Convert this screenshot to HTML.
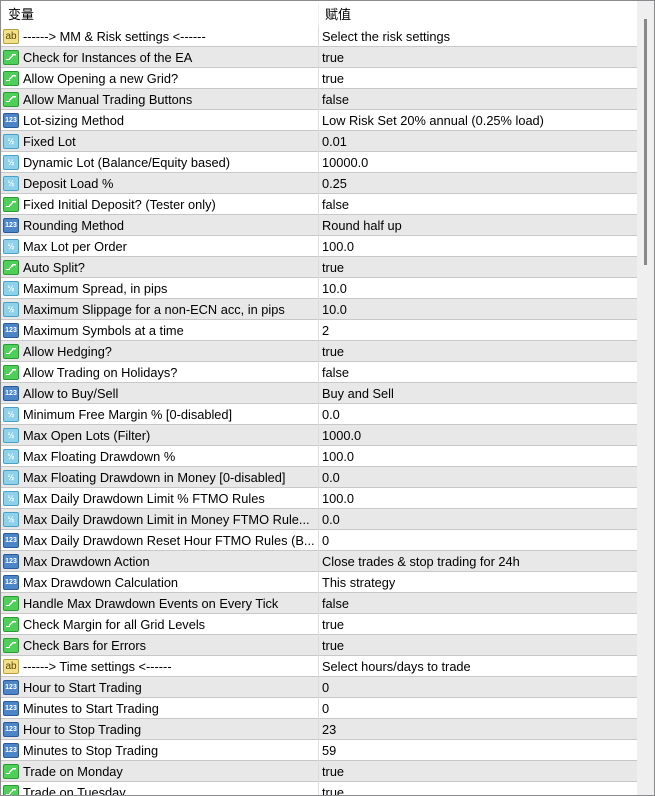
<!DOCTYPE html>
<html><head><meta charset="utf-8"><style>
*{margin:0;padding:0;box-sizing:border-box}
html,body{width:655px;height:796px;overflow:hidden}
body{background:#fff;font-family:"Liberation Sans","Noto Sans CJK SC",sans-serif;font-size:12.8px;color:#000;position:relative}
.clip{position:absolute;left:1px;top:1px;width:636px;height:794px;overflow:hidden}
.frame{position:absolute;left:0;top:0;width:655px;height:796px;border:1px solid #8a8a8f}
.hdr{position:absolute;left:0;top:0;width:636px;height:25px;background:#fff}
.hdr span{position:absolute;top:3px;font-size:13px}
.hdiv{position:absolute;left:317px;top:3px;width:1px;height:22px;background:#f0f0f0}
.row{position:absolute;left:0;width:636px;height:21px;border-bottom:1px solid #c8c8c8;white-space:nowrap}
.row.g{background:#e8e8e8}
.row .n{position:absolute;left:22px;top:3px}
.row .v{position:absolute;left:321px;top:3px}
.row .d{position:absolute;left:317px;top:0;width:1px;height:21px;background:#dcdcdc}
.ic{position:absolute;left:2px;top:3px;width:16px;height:15px;border-radius:2px;font-size:8px;line-height:13px;text-align:center;font-weight:bold}
.ab{background:#f3e08a;border:1px solid #b8a040;color:#5a4a00;font-size:10px;font-weight:normal}
.bo{background:#4fcf5a;border:1px solid #2a9a33}
.bo:after{content:"";position:absolute;left:2px;top:3px;width:10px;height:6px;background:linear-gradient(#fff,#fff) 0 5px/4px 1.5px no-repeat,linear-gradient(#fff,#fff) 6px 0/4px 1.5px no-repeat,linear-gradient(135deg,transparent 40%,#fff 40%,#fff 60%,transparent 60%) 3px 0/4px 6px no-repeat}
.n1{background:#4d86c8;border:1px solid #2a5a99;color:#fff;font-size:7px}
.hf{background:#8fd0ea;border:1px solid #4aa0c4;color:#fff;font-size:8px}
.sb{position:absolute;left:637px;top:1px;width:17px;height:794px;background:#efefef}
.th{position:absolute;left:644px;top:19px;width:3px;height:246px;background:#888}
</style></head><body>
<div class="clip">
<div class="hdr"><span style="left:7px">变量</span><span style="left:324px">赋值</span><div class="hdiv"></div></div>
<div class="row" style="top:25px"><div class="ic ab">ab</div><span class="n">------&gt; MM &amp; Risk settings &lt;------</span><div class="d"></div><span class="v">Select the risk settings</span></div>
<div class="row g" style="top:46px"><div class="ic bo"></div><span class="n">Check for Instances of the EA</span><div class="d"></div><span class="v">true</span></div>
<div class="row" style="top:67px"><div class="ic bo"></div><span class="n">Allow Opening a new Grid?</span><div class="d"></div><span class="v">true</span></div>
<div class="row g" style="top:88px"><div class="ic bo"></div><span class="n">Allow Manual Trading Buttons</span><div class="d"></div><span class="v">false</span></div>
<div class="row" style="top:109px"><div class="ic n1">123</div><span class="n">Lot-sizing Method</span><div class="d"></div><span class="v">Low Risk Set 20% annual (0.25% load)</span></div>
<div class="row g" style="top:130px"><div class="ic hf">½</div><span class="n">Fixed Lot</span><div class="d"></div><span class="v">0.01</span></div>
<div class="row" style="top:151px"><div class="ic hf">½</div><span class="n">Dynamic Lot (Balance/Equity based)</span><div class="d"></div><span class="v">10000.0</span></div>
<div class="row g" style="top:172px"><div class="ic hf">½</div><span class="n">Deposit Load %</span><div class="d"></div><span class="v">0.25</span></div>
<div class="row" style="top:193px"><div class="ic bo"></div><span class="n">Fixed Initial Deposit? (Tester only)</span><div class="d"></div><span class="v">false</span></div>
<div class="row g" style="top:214px"><div class="ic n1">123</div><span class="n">Rounding Method</span><div class="d"></div><span class="v">Round half up</span></div>
<div class="row" style="top:235px"><div class="ic hf">½</div><span class="n">Max Lot per Order</span><div class="d"></div><span class="v">100.0</span></div>
<div class="row g" style="top:256px"><div class="ic bo"></div><span class="n">Auto Split?</span><div class="d"></div><span class="v">true</span></div>
<div class="row" style="top:277px"><div class="ic hf">½</div><span class="n">Maximum Spread, in pips</span><div class="d"></div><span class="v">10.0</span></div>
<div class="row g" style="top:298px"><div class="ic hf">½</div><span class="n">Maximum Slippage for a non-ECN acc, in pips</span><div class="d"></div><span class="v">10.0</span></div>
<div class="row" style="top:319px"><div class="ic n1">123</div><span class="n">Maximum Symbols at a time</span><div class="d"></div><span class="v">2</span></div>
<div class="row g" style="top:340px"><div class="ic bo"></div><span class="n">Allow Hedging?</span><div class="d"></div><span class="v">true</span></div>
<div class="row" style="top:361px"><div class="ic bo"></div><span class="n">Allow Trading on Holidays?</span><div class="d"></div><span class="v">false</span></div>
<div class="row g" style="top:382px"><div class="ic n1">123</div><span class="n">Allow to Buy/Sell</span><div class="d"></div><span class="v">Buy and Sell</span></div>
<div class="row" style="top:403px"><div class="ic hf">½</div><span class="n">Minimum Free Margin % [0-disabled]</span><div class="d"></div><span class="v">0.0</span></div>
<div class="row g" style="top:424px"><div class="ic hf">½</div><span class="n">Max Open Lots (Filter)</span><div class="d"></div><span class="v">1000.0</span></div>
<div class="row" style="top:445px"><div class="ic hf">½</div><span class="n">Max Floating Drawdown %</span><div class="d"></div><span class="v">100.0</span></div>
<div class="row g" style="top:466px"><div class="ic hf">½</div><span class="n">Max Floating Drawdown in Money [0-disabled]</span><div class="d"></div><span class="v">0.0</span></div>
<div class="row" style="top:487px"><div class="ic hf">½</div><span class="n">Max Daily Drawdown Limit % FTMO Rules</span><div class="d"></div><span class="v">100.0</span></div>
<div class="row g" style="top:508px"><div class="ic hf">½</div><span class="n">Max Daily Drawdown Limit in Money FTMO Rule...</span><div class="d"></div><span class="v">0.0</span></div>
<div class="row" style="top:529px"><div class="ic n1">123</div><span class="n">Max Daily Drawdown Reset Hour FTMO Rules (B...</span><div class="d"></div><span class="v">0</span></div>
<div class="row g" style="top:550px"><div class="ic n1">123</div><span class="n">Max Drawdown Action</span><div class="d"></div><span class="v">Close trades &amp; stop trading for 24h</span></div>
<div class="row" style="top:571px"><div class="ic n1">123</div><span class="n">Max Drawdown Calculation</span><div class="d"></div><span class="v">This strategy</span></div>
<div class="row g" style="top:592px"><div class="ic bo"></div><span class="n">Handle Max Drawdown Events on Every Tick</span><div class="d"></div><span class="v">false</span></div>
<div class="row" style="top:613px"><div class="ic bo"></div><span class="n">Check Margin for all Grid Levels</span><div class="d"></div><span class="v">true</span></div>
<div class="row g" style="top:634px"><div class="ic bo"></div><span class="n">Check Bars for Errors</span><div class="d"></div><span class="v">true</span></div>
<div class="row" style="top:655px"><div class="ic ab">ab</div><span class="n">------&gt; Time settings &lt;------</span><div class="d"></div><span class="v">Select hours/days to trade</span></div>
<div class="row g" style="top:676px"><div class="ic n1">123</div><span class="n">Hour to Start Trading</span><div class="d"></div><span class="v">0</span></div>
<div class="row" style="top:697px"><div class="ic n1">123</div><span class="n">Minutes to Start Trading</span><div class="d"></div><span class="v">0</span></div>
<div class="row g" style="top:718px"><div class="ic n1">123</div><span class="n">Hour to Stop Trading</span><div class="d"></div><span class="v">23</span></div>
<div class="row" style="top:739px"><div class="ic n1">123</div><span class="n">Minutes to Stop Trading</span><div class="d"></div><span class="v">59</span></div>
<div class="row g" style="top:760px"><div class="ic bo"></div><span class="n">Trade on Monday</span><div class="d"></div><span class="v">true</span></div>
<div class="row" style="top:781px"><div class="ic bo"></div><span class="n">Trade on Tuesday</span><div class="d"></div><span class="v">true</span></div>
</div>
<div class="sb"></div><div class="th"></div>
<div class="frame"></div>
</body></html>
